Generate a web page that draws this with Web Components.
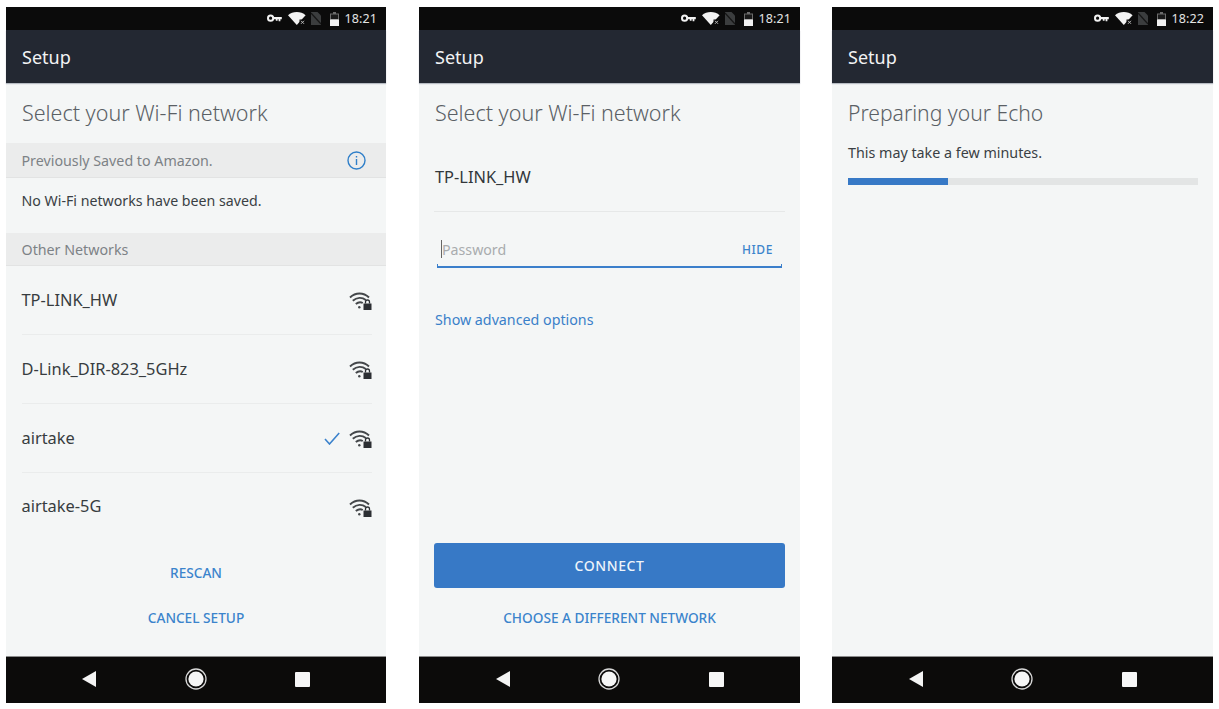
<!DOCTYPE html>
<html lang="en"><head><meta charset="utf-8"><title>Setup</title>
<style>
html,body{margin:0;padding:0;background:#fff}
body{font-family:"Noto Sans","Liberation Sans",sans-serif;width:1219px;height:709px;overflow:hidden}
.screens{display:flex;padding:7px 6px 0 6px;height:696px;box-sizing:content-box}
</style></head><body>
<div class="screens">
<phone-screen time="18:21" style="width:380px">
  <page-title>Select your Wi-Fi network</page-title>
  <section-head info>Previously Saved to Amazon.</section-head>
  <div style="height:55px;padding:0 0 11px 15.5px;display:flex;align-items:center;font-size:14.2px;color:#3a3f44;box-sizing:border-box">No Wi-Fi networks have been saved.</div>
  <section-head style="--h:33px">Other Networks</section-head>
  <network-row>TP-LINK_HW</network-row>
  <network-row>D-Link_DIR-823_5GHz</network-row>
  <network-row checked>airtake</network-row>
  <network-row last>airtake-5G</network-row>
  <div style="margin-top:auto;padding-bottom:28px;display:flex;flex-direction:column;align-items:center;gap:25px">
    <text-link>RESCAN</text-link>
    <text-link>CANCEL SETUP</text-link>
  </div>
</phone-screen>
<phone-screen time="18:21" style="width:381px;margin-left:33px">
  <page-title>Select your Wi-Fi network</page-title>
  <div style="margin:0 15px 0 15px;padding:0 0 2px 1px;height:69px;display:flex;align-items:center;box-sizing:border-box;border-bottom:1px solid #e6e8e8;font-size:16.4px;color:#32373b">TP-LINK_HW</div>
  <password-field></password-field>
  <div style="margin:42px 15px 0 16px;font-size:14.25px;color:#3a80c9">Show advanced options</div>
  <div style="margin-top:auto;padding:0 15px 28px;display:flex;flex-direction:column;align-items:center;gap:20px">
    <primary-button>CONNECT</primary-button>
    <text-link>CHOOSE A DIFFERENT NETWORK</text-link>
  </div>
</phone-screen>
<phone-screen time="18:22" style="width:381px;margin-left:32px">
  <page-title style="font-size:21.1px">Preparing your Echo</page-title>
  <div style="margin:0 16px;font-size:14.3px;line-height:20px;color:#3a3f44">This may take a few minutes.</div>
  <progress-bar value="28.7" style="margin:15px 15px 0 16px"></progress-bar>
</phone-screen>
</div>
<script>
function def(name,html,init){customElements.define(name,class extends HTMLElement{
  constructor(){super();this.attachShadow({mode:'open'}).innerHTML=html}
  connectedCallback(){if(init)init.call(this,this.shadowRoot)}
})}
def('status-bar',`<style>:host{display:flex;align-items:center;justify-content:flex-end;height:23px;background:#0b0b0b;color:#e4e4e4;font-size:12.5px;padding-right:9px;box-sizing:border-box;flex:none}
svg{display:block;flex:none}#t{margin-left:6px;letter-spacing:.1px}</style>
<svg width="15" height="9" viewBox="0 0 15 9" style="margin-right:6px"><circle cx="3.6" cy="4.2" r="2.6" fill="none" stroke="#f2f2f2" stroke-width="2"/><path d="M6 3.100h8.800v2.200h-1.400v2h-1.800v-2h-1v1.400H8.800V5.300H6z" fill="#f2f2f2"/></svg>
<svg width="18" height="13" viewBox="0 0 18 13" style="margin-right:5px"><path d="M0 3.200C2.400 1.200 5.400 0 8.800 0s6.400 1.200 8.800 3.200L8.800 13z" fill="#f2f2f2"/><rect x="11.500" y="7.500" width="6" height="5.500" fill="#0b0b0b"/><path d="M13 8.800l3 3M16 8.800l-3 3" stroke="#bbb" stroke-width="1"/></svg>
<svg width="10" height="13" viewBox="0 0 10 13" style="margin-right:9px"><path d="M0 0h6.500L10 3.500V13H0z" fill="#3b3d3e"/><path d="M0 1l10 11" stroke="#161616" stroke-width="1.200"/></svg>
<svg width="9" height="14" viewBox="0 0 9 14"><path d="M3 0h3v1.500h3V14H0V1.500h3z" fill="#6c6c6c"/><path d="M1 2.500h7V7H1z" fill="#1a1a1a"/><path d="M0 7.500h9V14H0z" fill="#f0f0f0"/></svg>
<span id="t"></span>`,function(s){s.getElementById('t').textContent=this.getAttribute('time')});
def('nav-bar',`<style>:host{display:flex;height:47px;padding-bottom:2px;background:#0c0b0a;border-top:1px solid #8b8b8b;box-sizing:border-box;flex:none;align-items:center;justify-content:center}
.r{display:flex;align-items:center;justify-content:space-between;width:228px}
svg{display:block}</style><div class="r">
<svg width="14" height="16" viewBox="0 0 14 16"><path d="M14 0v16L0 8z" fill="#f4f4f4"/></svg>
<svg width="22" height="22" viewBox="0 0 22 22"><circle cx="11" cy="11" r="10" fill="none" stroke="#d8d8d8" stroke-width="1.300"/><circle cx="11" cy="11" r="7.600" fill="#f6f6f6"/></svg>
<svg width="15" height="15" viewBox="0 0 15 15"><rect width="15" height="15" rx="1" fill="#f6f6f6"/></svg></div>`);
def('phone-screen',`<style>:host{display:flex;flex-direction:column;height:696px;flex:none;background:#f4f6f6}
.bar{height:53px;background:#232832;color:#f2f3f4;font-size:18px;display:flex;align-items:center;padding-left:16px;box-sizing:border-box;flex:none;box-shadow:0 1px 1px rgba(70,80,100,.35)}
main{flex:1;display:flex;flex-direction:column;min-height:0}</style>
<status-bar></status-bar><div class="bar">Setup</div><main><slot></slot></main><nav-bar></nav-bar>`,function(s){const b=s.querySelector('status-bar');b.setAttribute('time',this.getAttribute('time'));
 b.shadowRoot.getElementById('t').textContent=this.getAttribute('time')});
def('page-title',`<style>:host{display:flex;align-items:center;height:60px;padding:0 0 2px 16px;font-size:21.500px;font-weight:300;color:#5a6065;flex:none;box-sizing:border-box}</style><slot></slot>`);
def('section-head',`<style>:host{display:flex;align-items:center;justify-content:space-between;height:var(--h,35px);padding:0 20px 0 15.500px;background:#ebecec;color:#7d8286;font-size:14.250px;flex:none;box-sizing:border-box;border-bottom:1px solid #e2e3e3}
svg{display:none}:host([info]) svg{display:block}</style><slot></slot>
<svg width="19" height="19" viewBox="0 0 19 19"><circle cx="9.500" cy="9.500" r="8.500" fill="none" stroke="#2f7fc9" stroke-width="1.400"/><path d="M9.500 5v1.500M9.500 8v6" stroke="#2f7fc9" stroke-width="1.400"/></svg>`);
def('wifi-lock',`<style>:host{display:block;width:23px;height:18px;flex:none;margin-top:1px}svg{display:block}</style>
<svg width="23" height="18" viewBox="0 0 23 18" fill="none" stroke="#44474a" stroke-width="1.900"><path d="M1 5.500C6.500 .2 14.500 .2 20 5.500"/><path d="M3.800 8.800C7.800 5 13.200 5 16.800 8"/><path d="M6.800 12c2.400-2 5-2.200 7-1"/><circle cx="10.300" cy="15.300" r="1.200" fill="#44474a" stroke="none"/><rect x="14.500" y="11.500" width="8" height="6.500" fill="#2c2f33" stroke="none"/><path d="M16.500 11.500V10a2 2 0 0 1 4 0v1.500" stroke-width="1.300" stroke="#2c2f33"/></svg>`);
def('network-row',`<style>:host{display:flex;align-items:center;height:69px;margin:0 14px 0 15.500px;font-size:16.400px;color:#373c40;border-bottom:1px solid #eaecec;box-sizing:border-box;flex:none}
:host([last]){border-bottom-color:transparent}
span{flex:1;padding-bottom:2px}:host([last]) span{padding-bottom:4px}svg{display:none;margin-right:9px}:host([checked]) svg{display:block}</style>
<span><slot></slot></span><svg width="16" height="13" viewBox="0 0 16 13"><path d="M1 7l4.500 5L15.200 1" fill="none" stroke="#3b82cc" stroke-width="1.600"/></svg><wifi-lock></wifi-lock>`);
def('text-link',`<style>:host{display:block;color:#3b84cc;font-size:13.650px;font-weight:500;line-height:20px}</style><slot></slot>`);
def('primary-button',`<style>:host{display:flex;align-items:center;justify-content:center;align-self:stretch;height:45px;background:#3779c6;color:#eef4fa;border-radius:3px;font-size:14px;font-weight:500;letter-spacing:.6px}</style><slot></slot>`);
def('password-field',`<style>:host{display:flex;align-items:center;justify-content:space-between;height:38px;margin:18px 18px 0 18px;padding:2px 9px 0 5px;font-size:14.200px;color:#a9acae;position:relative;flex:none;box-sizing:border-box;border-bottom:2px solid #3b7fcb}
:host::before{content:"";position:absolute;left:4px;top:10px;width:1px;height:18px;background:#666}
:host::after{content:"";position:absolute;left:0;right:0;bottom:-2px;height:4px;border:solid #3b7fcb;border-width:0 1px;box-sizing:border-box}
b{font-weight:500;font-size:12px;color:#3b84cc;letter-spacing:.6px}</style><span>Password</span><b>HIDE</b>`);
def('progress-bar',`<style>:host{display:block;height:7px;background:#e3e5e5;flex:none}div{height:100%;background:#3779c6}</style><div></div>`,function(s){s.querySelector('div').style.width=this.getAttribute('value')+'%'});
</script>
</body></html>
